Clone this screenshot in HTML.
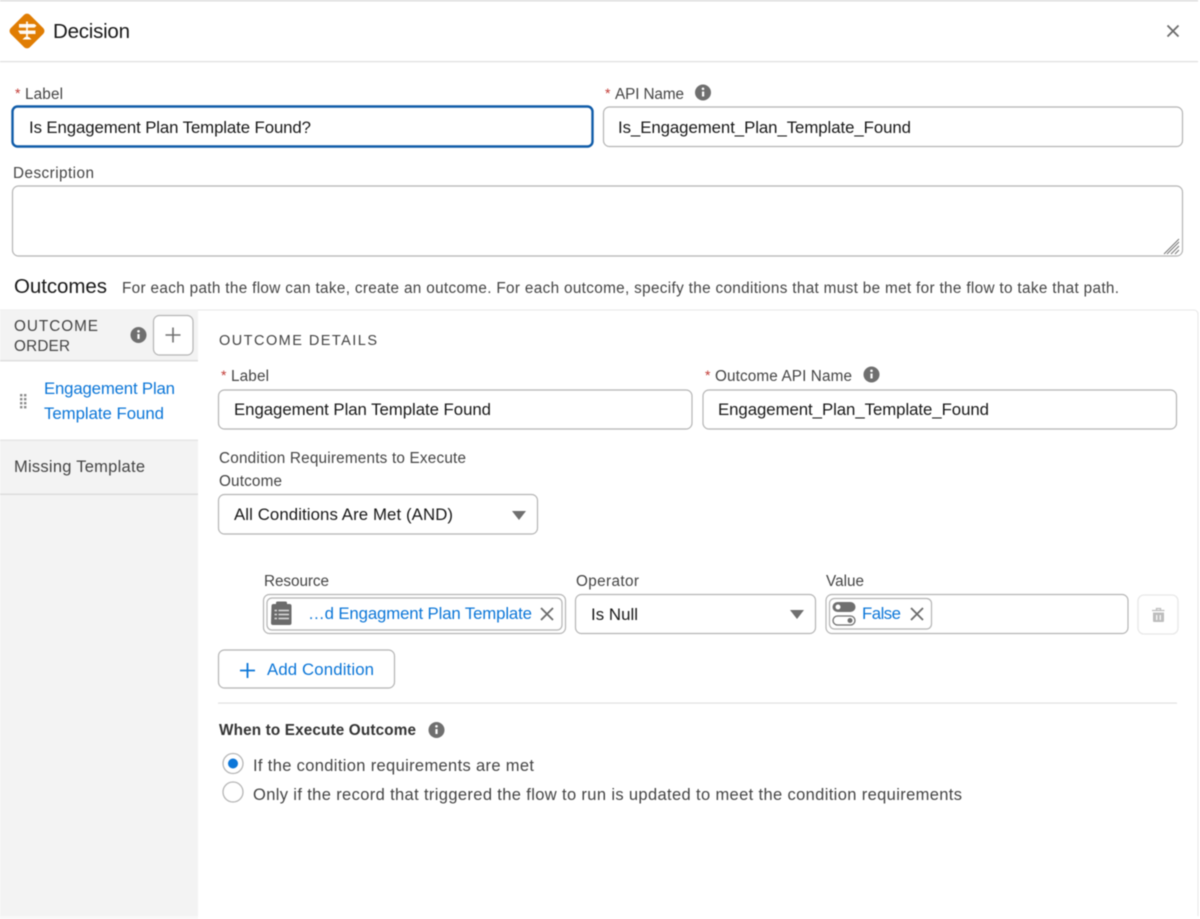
<!DOCTYPE html>
<html><head><meta charset="utf-8"><title>Decision</title>
<style>
html,body{margin:0;padding:0;background:#fff;width:1200px;height:919px;overflow:hidden}
svg{display:block;filter:blur(.4px)}
text{font-family:"Liberation Sans",sans-serif;font-size:15.3px;fill:#444;white-space:pre}
.d{fill:#181818;font-size:16.8px}
.b{fill:#0b76d8;font-size:16.8px}
.r{fill:#c23934;font-size:14px}
.f{fill:#fff;stroke:#b4b4b4;stroke-width:1.2}
</style></head><body>
<svg width="1200" height="919" viewBox="0 0 1200 919" xmlns="http://www.w3.org/2000/svg">
<rect width="1200" height="919" fill="#fff"/>
<rect width="1198" height="1.500" fill="#dcdcdc"/>
<rect y="61" width="1198" height="1.200" fill="#dedede"/>
<!-- header -->
<rect x="13.500" y="17.500" width="27" height="27" rx="4" transform="rotate(45 27 31)" fill="#e07d03"/>
<path d="M19 24h15.500l2 1.800-2 1.800H19zM18 30.500h17.500v3.500H20z" fill="#fff" opacity=".95"/>
<path d="M26 21.500h2v16h-2z" fill="#fff" opacity=".85"/>
<path d="M22.500 39.500l2.500-2.500h4l2.500 2.500z" fill="#fff"/>
<text x="53" y="38" textLength="77" class="d" style="font-size:20.500px">Decision</text>
<path d="M1167.500 25.500l11 11M1178.500 25.500l-11 11" stroke="#6b6b6b" stroke-width="1.800" fill="none"/>
<!-- top form -->
<text x="15" y="98" class="r">*</text>
<text x="25" y="99" textLength="38">Label</text>
<rect x="12.500" y="106.500" width="580" height="40" rx="5" fill="#fff" stroke="#0f5ba8" stroke-width="2.400"/>
<text x="29" y="133" textLength="282" class="d">Is Engagement Plan Template Found?</text>
<text x="605" y="98" class="r">*</text>
<text x="615" y="99" textLength="69">API Name</text>
<circle cx="703" cy="92.500" r="8" fill="#6f6f6f"/>
<rect x="702" y="91.500" width="2.200" height="5" fill="#fff"/><circle cx="703" cy="88.800" r="1.300" fill="#fff"/>
<rect x="603.500" y="107" width="579" height="39.500" rx="6" class="f"/>
<text x="618" y="133" textLength="293" class="d">Is_Engagement_Plan_Template_Found</text>
<text x="13" y="178" textLength="81">Description</text>
<rect x="12.500" y="186" width="1170" height="70" rx="6" class="f"/>
<path d="M1164 254l15-15M1167 254l12-12M1171 254l8-8M1175 254l4-4" stroke="#777" stroke-width="1" fill="none"/>
<text x="14" y="293" textLength="93" class="d" style="font-size:20.500px">Outcomes</text>
<text x="122" y="293" textLength="997">For each path the flow can take, create an outcome. For each outcome, specify the conditions that must be met for the flow to take that path.</text>
<!-- panel -->
<path d="M0 310h1194a4 4 0 0 1 4 4v602" fill="#fff" stroke="#e6e6e6" stroke-width="1"/>
<rect x="0" y="310" width="198" height="606" fill="#f3f3f3"/>
<rect x="0" y="361" width="198" height="79" fill="#fff"/>
<rect x="0" y="360" width="198" height="1.500" fill="#dfdfdf"/>
<rect x="0" y="439.500" width="198" height="1.500" fill="#e6e6e6"/>
<rect x="0" y="493.500" width="198" height="1.500" fill="#dcdcdc"/>
<rect x="0" y="916" width="198" height="3" fill="#f8f8f8"/>
<text x="14" y="331" textLength="84">OUTCOME</text>
<text x="14" y="351" textLength="56">ORDER</text>
<circle cx="138.500" cy="335" r="8" fill="#6f6f6f"/>
<rect x="137.400" y="334" width="2.200" height="5" fill="#fff"/><circle cx="138.500" cy="331.300" r="1.300" fill="#fff"/>
<rect x="153.500" y="315.500" width="39.500" height="39.500" rx="6" class="f"/>
<path d="M173 327.500v15M165.500 335h15" stroke="#6f6f6f" stroke-width="1.600" fill="none"/>
<g fill="#8a8a8a"><rect x="20" y="394" width="2.400" height="2.400"/><rect x="24" y="394" width="2.400" height="2.400"/><rect x="20" y="398" width="2.400" height="2.400"/><rect x="24" y="398" width="2.400" height="2.400"/><rect x="20" y="402" width="2.400" height="2.400"/><rect x="24" y="402" width="2.400" height="2.400"/><rect x="20" y="406" width="2.400" height="2.400"/><rect x="24" y="406" width="2.400" height="2.400"/></g>
<text x="44" y="394" textLength="131" class="b">Engagement Plan</text>
<text x="44" y="419" textLength="120" class="b">Template Found</text>
<text x="14" y="472" textLength="131" style="font-size:16.500px">Missing Template</text>
<!-- details -->
<text x="219" y="345" textLength="158" style="font-size:14.500px">OUTCOME DETAILS</text>
<text x="221" y="380" class="r">*</text>
<text x="231" y="381" textLength="38">Label</text>
<rect x="218.500" y="390" width="473.500" height="39" rx="6" class="f"/>
<text x="234" y="415" textLength="257" class="d">Engagement Plan Template Found</text>
<text x="705" y="380" class="r">*</text>
<text x="715" y="381" textLength="137">Outcome API Name</text>
<circle cx="871.500" cy="374.500" r="8" fill="#6f6f6f"/>
<rect x="870.400" y="373.500" width="2.200" height="5" fill="#fff"/><circle cx="871.500" cy="370.800" r="1.300" fill="#fff"/>
<rect x="703" y="390" width="473.500" height="39" rx="6" class="f"/>
<text x="718" y="415" textLength="271" class="d">Engagement_Plan_Template_Found</text>
<text x="219" y="463" textLength="247">Condition Requirements to Execute</text>
<text x="219" y="486" textLength="63">Outcome</text>
<rect x="218.500" y="494.500" width="319" height="39.500" rx="6" class="f"/>
<text x="234" y="520" textLength="219" class="d">All Conditions Are Met (AND)</text>
<path d="M512 511h14l-7 9z" fill="#6f6f6f"/>
<!-- condition -->
<text x="264" y="586" textLength="65">Resource</text>
<text x="576" y="586" textLength="63">Operator</text>
<text x="826" y="586" textLength="38">Value</text>
<rect x="263.500" y="594.500" width="302" height="39" rx="6" class="f"/>
<rect x="267" y="598" width="295" height="32" rx="5" class="f"/>
<path d="M271.500 606a2 2 0 0 1 2-2h2.500v-1a1.500 1.500 0 0 1 1.500-1.500h8a1.500 1.500 0 0 1 1.500 1.500v1h2.500a2 2 0 0 1 2 2v17a2 2 0 0 1-2 2h-16.500a2 2 0 0 1-2-2z" fill="#6b6b6b"/>
<path d="M274.500 610.500h2.500M278.500 610.500h10.500M274.500 614.500h2.500M278.500 614.500h10.500M274.500 618.500h2.500M278.500 618.500h10.500" stroke="#ddd" stroke-width="1.600" fill="none"/>
<text x="308" y="619" textLength="224" class="b">…d Engagment Plan Template</text>
<path d="M541 608l12 12M553 608l-12 12" stroke="#6b6b6b" stroke-width="1.800" fill="none"/>
<rect x="575.500" y="594.500" width="240" height="39" rx="6" class="f"/>
<text x="591" y="620" textLength="47" class="d">Is Null</text>
<path d="M790 610h14l-7 9z" fill="#6f6f6f"/>
<rect x="826" y="594.500" width="302" height="39" rx="6" class="f"/>
<rect x="829.500" y="598.500" width="102" height="30.500" rx="5" class="f"/>
<rect x="832.500" y="602" width="23" height="10" rx="5" fill="#6f6f6f"/><circle cx="838" cy="607" r="2.500" fill="#fff"/>
<rect x="833" y="616" width="22" height="9" rx="4.500" fill="#fff" stroke="#6f6f6f" stroke-width="1.300"/><circle cx="850" cy="620.500" r="2.500" fill="#6f6f6f"/>
<text x="862" y="619" textLength="39" class="b">False</text>
<path d="M911 608l12 12M923 608l-12 12" stroke="#6b6b6b" stroke-width="1.800" fill="none"/>
<rect x="1138" y="595" width="40" height="39" rx="6" fill="#fff" stroke="#e8e8e8" stroke-width="1.300"/>
<path d="M1152 610.500h12.500M1156.500 610v-1.500h4v1.500" stroke="#bdbdbd" stroke-width="1.300" fill="none"/>
<path d="M1153 612.500h11v8.500a1 1 0 0 1-1 1h-9a1 1 0 0 1-1-1z" fill="#bdbdbd"/>
<path d="M1156.700 615v5M1160.300 615v5" stroke="#fff" stroke-width="1.200"/>
<rect x="218.500" y="650" width="176" height="38" rx="6" class="f"/>
<path d="M247.500 663v15M240 670.500h15" stroke="#0b76d8" stroke-width="1.800" fill="none"/>
<text x="267" y="675" textLength="107" class="b">Add Condition</text>
<rect x="218" y="702.500" width="959" height="1.200" fill="#e0e0e0"/>
<text x="219" y="735" textLength="197" style="font-weight:bold;fill:#333">When to Execute Outcome</text>
<circle cx="436.500" cy="730" r="8" fill="#6f6f6f"/>
<rect x="435.400" y="729" width="2.200" height="5" fill="#fff"/><circle cx="436.500" cy="726.300" r="1.300" fill="#fff"/>
<circle cx="233" cy="763.500" r="10" fill="#fff" stroke="#b5b5b5" stroke-width="1.300"/>
<circle cx="233" cy="763.500" r="5" fill="#0b76d8"/>
<text x="253" y="771" textLength="281" style="font-size:16.500px">If the condition requirements are met</text>
<circle cx="233" cy="792" r="10" fill="#fff" stroke="#b5b5b5" stroke-width="1.300"/>
<text x="253" y="800" textLength="709" style="font-size:16.500px">Only if the record that triggered the flow to run is updated to meet the condition requirements</text>
</svg>
</body></html>
